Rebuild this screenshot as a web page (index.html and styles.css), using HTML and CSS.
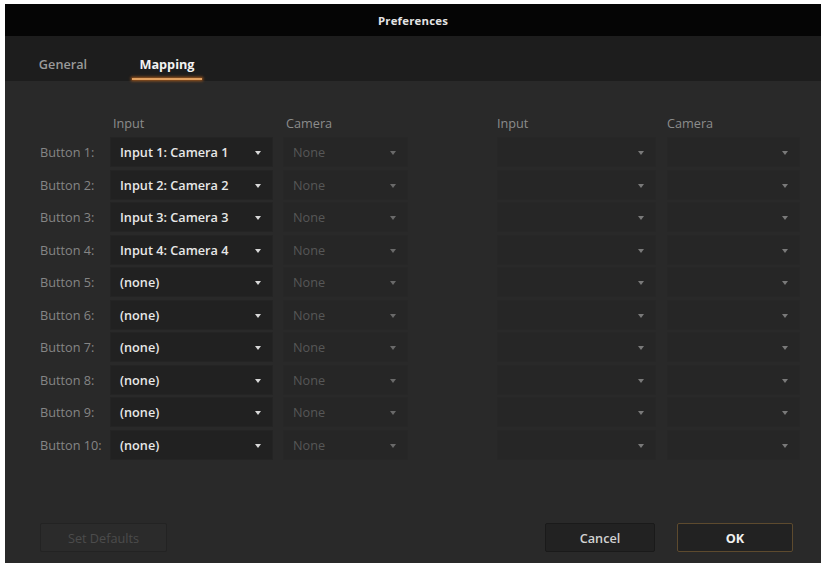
FILE: index.html
```html
<!DOCTYPE html>
<html lang="en">
<head>
<meta charset="utf-8">
<title>Preferences</title>
<link rel="stylesheet" href="styles.css">
</head>
<body>
<div class="window">
  <div class="titlebar">Preferences</div>
  <div class="tabs">
    <div class="tab">General</div>
    <div class="tab active">Mapping</div>
  </div>
  <div class="content">
    <div class="mapping">
      <div class="grid left">
        <div class="hdr-spacer"></div>
        <div class="hdr">Input</div>
        <div class="hdr">Camera</div>

        <div class="label">Button 1:</div>
        <div class="dd input">Input 1: Camera 1</div>
        <div class="dd cam">None</div>

        <div class="label">Button 2:</div>
        <div class="dd input">Input 2: Camera 2</div>
        <div class="dd cam">None</div>

        <div class="label">Button 3:</div>
        <div class="dd input">Input 3: Camera 3</div>
        <div class="dd cam">None</div>

        <div class="label">Button 4:</div>
        <div class="dd input">Input 4: Camera 4</div>
        <div class="dd cam">None</div>

        <div class="label">Button 5:</div>
        <div class="dd input">(none)</div>
        <div class="dd cam">None</div>

        <div class="label">Button 6:</div>
        <div class="dd input">(none)</div>
        <div class="dd cam">None</div>

        <div class="label">Button 7:</div>
        <div class="dd input">(none)</div>
        <div class="dd cam">None</div>

        <div class="label">Button 8:</div>
        <div class="dd input">(none)</div>
        <div class="dd cam">None</div>

        <div class="label">Button 9:</div>
        <div class="dd input">(none)</div>
        <div class="dd cam">None</div>

        <div class="label">Button 10:</div>
        <div class="dd input">(none)</div>
        <div class="dd cam">None</div>
      </div>

      <div class="grid right">
        <div class="hdr">Input</div>
        <div class="hdr">Camera</div>
        <div class="dd empty"></div><div class="dd empty"></div>
        <div class="dd empty"></div><div class="dd empty"></div>
        <div class="dd empty"></div><div class="dd empty"></div>
        <div class="dd empty"></div><div class="dd empty"></div>
        <div class="dd empty"></div><div class="dd empty"></div>
        <div class="dd empty"></div><div class="dd empty"></div>
        <div class="dd empty"></div><div class="dd empty"></div>
        <div class="dd empty"></div><div class="dd empty"></div>
        <div class="dd empty"></div><div class="dd empty"></div>
        <div class="dd empty"></div><div class="dd empty"></div>
      </div>
    </div>

    <div class="footer">
      <button class="btn defaults">Set Defaults</button>
      <div class="spacer"></div>
      <button class="btn cancel">Cancel</button>
      <button class="btn ok">OK</button>
    </div>
  </div>
</div>
</body>
</html>
```

FILE: styles.css
```css
* { box-sizing: border-box; }

html, body {
  margin: 0;
  background: #ffffff;
}

body {
  padding: 4px 2px 2px 5px;
  font-family: "Open Sans", "Noto Sans", "Liberation Sans", sans-serif;
  font-size: 12.7px;
}

.window {
  width: 816px;
  height: 559px;
  background: #292929;
  display: flex;
  flex-direction: column;
}

.titlebar {
  height: 32px;
  background: #050505;
  color: #e4e4e4;
  font-weight: 700;
  font-size: 11.4px;
  display: flex;
  align-items: center;
  justify-content: center;
  letter-spacing: 0.2px;
}

.tabs {
  height: 45px;
  background: #1d1d1d;
  display: flex;
  padding-left: 23px;
  gap: 34px;
}

.tab {
  position: relative;
  width: 70px;
  text-align: center;
  padding-top: 20px;
  line-height: 16px;
  color: #9a9a9a;
  font-weight: 600;
}

.tab.active {
  color: #f2f2f2;
  font-weight: 700;
}

.tab.active::after {
  content: "";
  position: absolute;
  left: 0;
  right: 0;
  bottom: 1px;
  height: 2px;
  background: #e0a060;
  box-shadow: 0 0 3px 1px rgba(210, 110, 30, 0.75);
}

.content {
  flex: 1;
  display: flex;
  flex-direction: column;
  background: #292929;
}

.mapping {
  display: flex;
  padding: 34px 0 0 35px;
}

.grid {
  display: grid;
  row-gap: 2.5px;
  grid-auto-rows: 30px;
  grid-template-rows: 19.5px;
}

.grid.left {
  grid-template-columns: 60px 163px 125px;
  column-gap: 10px;
}

.grid.right {
  margin-left: 89px;
  grid-template-columns: 159px 133px;
  column-gap: 11px;
}

.hdr {
  color: #8c8c8c;
  line-height: 16px;
  padding-left: 3px;
}

.grid.right .hdr {
  padding-left: 0;
}

.label {
  color: #858585;
  display: flex;
  align-items: center;
  white-space: nowrap;
}

.dd {
  position: relative;
  background: #212121;
  border: 1px solid #242424;
  display: flex;
  align-items: center;
  padding-left: 9px;
  white-space: nowrap;
}

.dd::after {
  content: "";
  position: absolute;
  right: 11px;
  top: 13px;
  border-left: 3px solid transparent;
  border-right: 3px solid transparent;
  border-top: 4px solid #d8d8d8;
}

.dd.input {
  color: #e8e8e8;
  font-weight: 600;
}

.dd.cam {
  background: #262626;
  border-color: #272727;
  color: #575757;
}

.dd.cam::after {
  border-top-color: #6a6a6a;
}

.dd.empty {
  background: #262626;
  border-color: #272727;
}

.dd.empty::after {
  border-top-color: #7a7a7a;
}

.footer {
  margin-top: auto;
  display: flex;
  align-items: center;
  padding: 0 28px 11px 35px;
  gap: 22px;
}

.spacer { flex: 1; }

.btn {
  height: 29px;
  font-family: inherit;
  font-size: 12.7px;
  font-weight: 600;
  border-radius: 2px;
  padding: 0;
}

.btn.defaults {
  width: 127px;
  background: #2b2b2b;
  border: 1px solid #232323;
  color: #4c4c4c;
  font-weight: 400;
}

.btn.cancel {
  width: 110px;
  background: #222222;
  border: 1px solid #1a1a1a;
  color: #d2d2d2;
}

.btn.ok {
  width: 116px;
  background: #222222;
  border: 1px solid #5d4a2e;
  color: #f0f0f0;
  font-weight: 700;
}
```
